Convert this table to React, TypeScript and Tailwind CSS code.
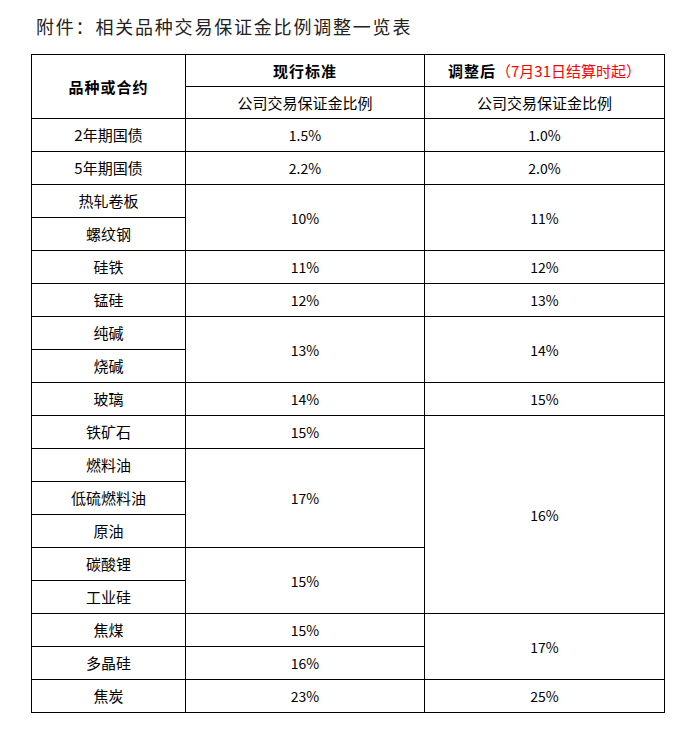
const rows: { name: string; cur?: string; curSpan?: number; next?: string; nextSpan?: number }[] = [
  { name: '2年期国债', cur: '1.5%', next: '1.0%' },
  { name: '5年期国债', cur: '2.2%', next: '2.0%' },
  { name: '热轧卷板', cur: '10%', curSpan: 2, next: '11%', nextSpan: 2 },
  { name: '螺纹钢' },
  { name: '硅铁', cur: '11%', next: '12%' },
  { name: '锰硅', cur: '12%', next: '13%' },
  { name: '纯碱', cur: '13%', curSpan: 2, next: '14%', nextSpan: 2 },
  { name: '烧碱' },
  { name: '玻璃', cur: '14%', next: '15%' },
  { name: '铁矿石', cur: '15%', next: '16%', nextSpan: 6 },
  { name: '燃料油', cur: '17%', curSpan: 3 },
  { name: '低硫燃料油' },
  { name: '原油' },
  { name: '碳酸锂', cur: '15%', curSpan: 2 },
  { name: '工业硅' },
  { name: '焦煤', cur: '15%', next: '17%', nextSpan: 2 },
  { name: '多晶硅', cur: '16%' },
  { name: '焦炭', cur: '23%', next: '25%' },
]

const cell = 'border border-black p-0 text-center align-middle'

export default function App() {
  return (
    <div className="bg-white min-h-[741px] w-[696px] font-['Noto_Sans_CJK_SC',sans-serif] text-black">
      <div className="pt-[12px] pl-[36px] h-[54px]">
        <h1 className="text-[18px] leading-[28px] tracking-[1.8px] text-[#222]">附件：相关品种交易保证金比例调整一览表</h1>
      </div>
      <table className="ml-[31px] table-fixed border-collapse w-[633px] text-[15px] leading-[20px]">
        <colgroup>
          <col className="w-[154px]" />
          <col className="w-[239px]" />
          <col className="w-[240px]" />
        </colgroup>
        <thead>
          <tr className="h-[32px]">
            <th rowSpan={2} className={`${cell} font-bold tracking-[1px]`}>品种或合约</th>
            <th className={`${cell} font-bold tracking-[1px]`}>现行标准</th>
            <th className={`${cell} font-bold`}>
              <span className="tracking-[1px]">调整后</span>
              <span className="font-normal text-[#ff0000]">（7月31日结算时起）</span>
            </th>
          </tr>
          <tr className="h-[32px]">
            <td className={cell}>公司交易保证金比例</td>
            <td className={cell}>公司交易保证金比例</td>
          </tr>
        </thead>
        <tbody>
          {rows.map((r, i) => (
            <tr key={i} className="h-[33px]">
              <td className={cell}>{r.name}</td>
              {r.cur && (
                <td rowSpan={r.curSpan} className={`${cell} text-[14px]`}>{r.cur}</td>
              )}
              {r.next && (
                <td rowSpan={r.nextSpan} className={`${cell} text-[14px]`}>{r.next}</td>
              )}
            </tr>
          ))}
        </tbody>
      </table>
    </div>
  )
}
